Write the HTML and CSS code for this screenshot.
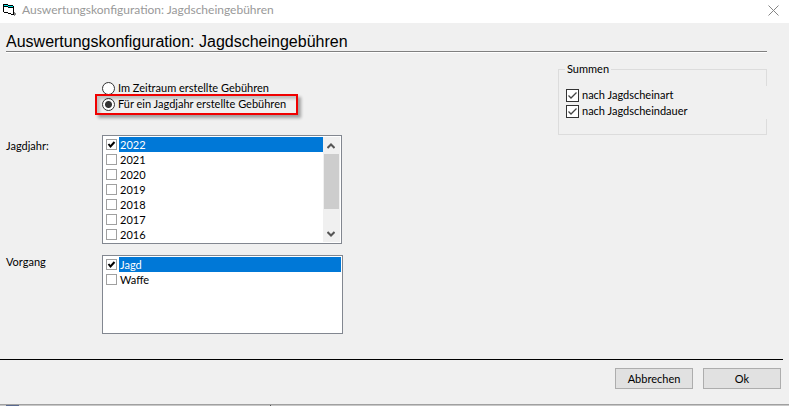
FILE: index.html
```html
<!DOCTYPE html>
<html lang="de">
<head>
<meta charset="utf-8">
<title>Auswertungskonfiguration: Jagdscheingebühren</title>
<link rel="stylesheet" href="styles.css">
</head>
<body>
<header class="titlebar">
  <svg class="app-icon" width="14" height="13" viewBox="0 0 14 13" shape-rendering="crispEdges" aria-hidden="true">
    <path d="M1 1h4v1h5v7H5V8H1z" fill="#fff"/>
    <path d="M0 0h5v1h5v1h1v9H8v-1H5V9H1V8H0zM1 1v7h4v1h3v1h2V2H5V1z" fill="#000" fill-rule="evenodd"/>
    <path d="M1 1h4v1h5v1H5V2H1z" fill="#00e5e5"/>
    <path d="M1 2h4v1h5v1H5V3H1z" fill="#000"/>
    <path d="M11 8h1v1h1v2h-1v1h-1z" fill="#888"/>
  </svg>
  <span class="title">Auswertungskonfiguration: Jagdscheingebühren</span>
  <button class="close" type="button" aria-label="Schließen">
    <svg width="11" height="11" viewBox="0 0 11 11" aria-hidden="true"><path d="M.5 .5l10 10M10.500 .5l-10 10" stroke="#858585" fill="none"/></svg>
  </button>
</header>
<form class="dialog">
  <h1>Auswertungskonfiguration: Jagdscheingebühren</h1>
  <main class="content">
    <div class="fields">
      <div class="modes">
        <label class="option"><input type="radio" name="modus">Im Zeitraum erstellte Gebühren</label>
        <label class="option marked"><input type="radio" name="modus" checked>Für ein Jagdjahr erstellte Gebühren</label>
      </div>
      <span class="caption" id="jahr">Jagdjahr:</span>
      <div class="listbox" role="group" aria-labelledby="jahr">
        <div class="items">
          <label class="item selected"><input type="checkbox" checked><span>2022</span></label>
          <label class="item"><input type="checkbox"><span>2021</span></label>
          <label class="item"><input type="checkbox"><span>2020</span></label>
          <label class="item"><input type="checkbox"><span>2019</span></label>
          <label class="item"><input type="checkbox"><span>2018</span></label>
          <label class="item"><input type="checkbox"><span>2017</span></label>
          <label class="item"><input type="checkbox"><span>2016</span></label>
        </div>
        <div class="scrollbar">
          <button type="button" aria-label="Nach oben"><svg width="8" height="6" viewBox="0 0 8 6"><path d="M.5 5L4 1.500L7.500 5" fill="none" stroke="#555" stroke-width="2"/></svg></button>
          <div class="track"><div class="thumb"></div></div>
          <button type="button" aria-label="Nach unten"><svg width="8" height="6" viewBox="0 0 8 6"><path d="M.5 1L4 4.500L7.500 1" fill="none" stroke="#555" stroke-width="2"/></svg></button>
        </div>
      </div>
      <span class="caption high" id="vorgang">Vorgang</span>
      <div class="listbox short" role="group" aria-labelledby="vorgang">
        <div class="items">
          <label class="item selected"><input type="checkbox" checked><span>Jagd</span></label>
          <label class="item"><input type="checkbox"><span>Waffe</span></label>
        </div>
      </div>
    </div>
    <fieldset class="sums">
      <legend>Summen</legend>
      <div class="sum-options">
        <label class="option"><input type="checkbox" checked>nach Jagdscheinart</label>
        <label class="option"><input type="checkbox" checked>nach Jagdscheindauer</label>
      </div>
    </fieldset>
  </main>
  <footer class="actions">
    <button type="button">Abbrechen</button>
    <button type="submit">Ok</button>
  </footer>
</form>
<div class="window-edge"><span class="edge-icon"></span><span class="edge-mark"></span></div>
</body>
</html>
```
FILE: styles.css
```css
* {
  box-sizing: border-box;
}

body {
  margin: 0;
  min-height: 100vh;
  display: flex;
  flex-direction: column;
  background: #f0f0f0;
  color: #000;
  font: 11px/16px Lato, "Liberation Sans", sans-serif;
}

button,
input {
  font: inherit;
  color: inherit;
  margin: 0;
  padding: 0;
}

.titlebar {
  display: flex;
  align-items: center;
  height: 23px;
  padding: 0 10px 3px 3px;
  background: #fff;
}

.app-icon {
  margin-right: 5px;
}

.title {
  flex: 1;
  color: #999;
  font: 12px/16px Lato, "Open Sans", sans-serif;
}

.close {
  display: flex;
  border: 0;
  background: none;
}

.dialog {
  flex: 1;
  display: flex;
  flex-direction: column;
}

h1 {
  margin: 0 22px 0 6px;
  padding-top: 9px;
  border-bottom: 1px solid #808080;
  box-shadow: 0 1px #fff;
  font: 16px/19px "Liberation Sans", Arial, sans-serif;
}

.content {
  flex: 1;
  display: flex;
  justify-content: space-between;
  align-items: flex-start;
  padding: 28px 22px 24px 6px;
}

.fields {
  display: grid;
  grid-template-columns: 96px 241px;
}

.modes {
  grid-column: 2;
  margin-bottom: 23px;
}

.option {
  display: flex;
  align-items: center;
  gap: 3px;
  height: 16px;
  white-space: nowrap;
}

.marked {
  position: relative;
}

.marked::after {
  content: "";
  position: absolute;
  inset: -2px 45px -3px -7px;
  border: 2px solid #f00000;
  box-shadow: 3px 3px 3px #0005, inset 3px 3px 3px #0003;
  pointer-events: none;
}

input {
  appearance: none;
  flex: none;
  width: 13px;
  height: 13px;
  border: 1px solid #333;
  background: #fff;
}

input[type="radio"] {
  border-radius: 50%;
}

input[type="radio"]:checked {
  background: radial-gradient(circle, #333 3px, #fff 4px);
}

.caption {
  padding-top: 3px;
}

.caption.high {
  padding-top: 0;
  line-height: 14px;
}

.listbox {
  display: flex;
  width: 240px;
  margin-bottom: 11px;
  padding: 1px;
  border: 1px solid #828790;
  background: #fff;
}

.listbox.short {
  width: 241px;
  height: 79px;
  margin: 0;
}

.items {
  flex: 1;
}

.item {
  display: flex;
  align-items: center;
  height: 15px;
  padding-left: 2px;
  line-height: 15px;
}

.item input {
  width: 11px;
  height: 11px;
  margin-right: 2px;
  border-color: #a0a0a0;
}

.item span {
  flex: 1;
  padding-left: 1px;
}

.item.selected span {
  background: #0078d7;
  color: #fff;
}

.item input:checked {
  background: #fff url('data:image/svg+xml,<svg xmlns="http://www.w3.org/2000/svg" viewBox="0 0 9 9"><path d="M1.500 4L3.500 6.500L7.500 2" fill="none" stroke="black" stroke-width="2"/></svg>');
}

.sum-options input {
  background: #fff url('data:image/svg+xml,<svg xmlns="http://www.w3.org/2000/svg" viewBox="0 0 11 11"><path d="M1.500 5.500L4 8L9.500 2.500" fill="none" stroke="%23444" stroke-width="1.300"/></svg>');
}

.scrollbar {
  display: flex;
  flex-direction: column;
  width: 17px;
  padding-right: 1px;
  background: #f0f0f0;
}

.scrollbar button {
  display: flex;
  align-items: center;
  justify-content: center;
  height: 17px;
  border: 0;
  background: none;
}

.track {
  flex: 1;
}

.thumb {
  margin-left: 1px;
  height: 78%;
  background: #cdcdcd;
}

.sums {
  width: 209px;
  height: 74px;
  margin: -19px 0 0;
  padding: 0;
  border: 1px solid #dcdcdc;
}

legend {
  margin-left: 6px;
  padding: 0 2px;
  line-height: 16px;
}

.sum-options {
  margin: 9px -1px 0 0;
  padding: 1px 0 0 7px;
  background: #f0f0f0;
}

.actions {
  display: flex;
  justify-content: flex-end;
  gap: 10px;
  height: 45px;
  margin-right: 6px;
  padding: 8px 2px 0 0;
  border-top: 1px solid #000;
}

.actions button {
  width: 78px;
  height: 21px;
  border: 1px solid #adadad;
  background: #e1e1e1;
}

.window-edge {
  display: flex;
  height: 2px;
  padding-left: 6px;
  border-top: 1px solid #a0a0a0;
  background: #c8c8c8;
}

.edge-icon {
  width: 13px;
  background: #5a6a90;
}

.edge-mark {
  width: 1px;
  margin-left: 251px;
  background: #555;
}
```
